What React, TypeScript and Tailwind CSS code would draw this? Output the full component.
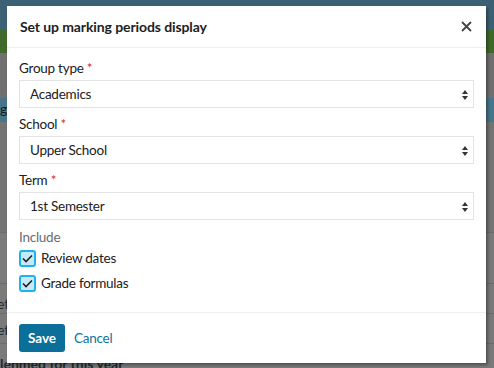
import React from "react"

const font = { fontFamily: 'Lato, "Liberation Sans", sans-serif' }

function SelectField({ label, value }: { label: string; value: string }) {
  return (
    <div className="flex flex-col">
      <label className="text-[13.5px] tracking-[-0.25px] leading-[18px] text-[#212121] mb-[3px]">
        {label} <span className="text-[#e0262b]">*</span>
      </label>
      <div className="relative h-[28px] border border-[#e2e3e4] bg-white flex items-center pl-[10px]">
        <span className="text-[13.5px] tracking-[-0.25px] text-[#212121]">{value}</span>
        <svg className="absolute right-[4px] top-[8px]" width="8" height="12" viewBox="0 0 8 12">
          <path d="M4 1 L7 5 L1 5 Z" fill="#333" />
          <path d="M4 11 L7 7 L1 7 Z" fill="#333" />
        </svg>
      </div>
    </div>
  )
}

function Check({ label }: { label: string }) {
  return (
    <div className="flex items-center gap-[5px] h-[17px]">
      <div className="w-[17px] h-[17px] rounded-[3px] border-2 border-[#1fb2ea] bg-[#c6e9f7] flex items-center justify-center">
        <svg width="11" height="9" viewBox="0 0 11 9">
          <path d="M1 4.5 L4 7.5 L10 1.5" stroke="#1f1f1f" strokeWidth="1.6" fill="none" />
        </svg>
      </div>
      <span className="text-[13.5px] tracking-[-0.25px] text-[#212121]">{label}</span>
    </div>
  )
}

export default function App() {
  return (
    <div className="relative w-[494px] h-[368px] overflow-hidden bg-[#777777]" style={font}>
      {/* page behind the dimmed overlay */}
      <div className="flex flex-col">
        <div className="h-[30px] bg-[#3d6174]" />
        <div className="h-[23px] bg-[#3f6a2b]" />
        <div className="h-[45px] bg-[#707070]" />
        <div className="h-[24px] bg-[#47768b] text-[14px] text-[#1a1a1a] leading-[22px]">g</div>
        <div className="h-[110px] bg-[#747474]" />
        <div className="h-[51px] bg-[#7a7a7a] border-t border-[#6c6c6c]" />
        <div className="h-[30px] bg-[#7a7a7a] border-t border-[#6c6c6c] text-[14px] text-[#1e2a33] leading-[40px] -ml-[3px]">ef</div>
        <div className="h-[30px] bg-[#7a7a7a] border-t border-[#6c6c6c] text-[14px] text-[#1e2a33] leading-[32px] -ml-[3px]">ef</div>
        <div className="h-[30px] bg-[#7a7a7a] border-t border-[#6c6c6c] text-[14px] text-[#1e2a33] font-bold leading-[40px]">lehmed for this year</div>
      </div>

      {/* modal */}
      <div className="absolute left-[7px] top-[6px] w-[479px] h-[357px] bg-white shadow-[2px_2px_3px_rgba(0,0,0,0.35)] flex flex-col">
        <div className="h-[42px] flex items-center justify-between pl-[13px] pr-[14px] border-b border-[#eeeeee]">
          <span className="text-[14px] tracking-[-0.1px] font-bold text-[#212121]">Set up marking periods display</span>
          <svg width="11" height="11" viewBox="0 0 11 11">
            <path d="M1 1 L10 10 M10 1 L1 10" stroke="#444" strokeWidth="1.8" />
          </svg>
        </div>
        <div className="h-[265px] flex flex-col px-[12px] pt-[11px] gap-[7px] border-b border-[#eeeeee]">
          <SelectField label="Group type" value="Academics" />
          <SelectField label="School" value="Upper School" />
          <SelectField label="Term" value="1st Semester" />
          <div className="flex flex-col mt-[1px]">
            <span className="text-[13.5px] tracking-[-0.25px] leading-[18px] text-[#686c73] mb-[4px]">Include</span>
            <Check label="Review dates" />
            <div className="h-[8px]" />
            <Check label="Grade formulas" />
          </div>
        </div>
        <div className="h-[50px] flex items-center gap-[9px] px-[12px]">
          <button className="h-[28px] w-[46px] rounded-[3px] bg-[#0b6f99] text-white text-[13.5px] font-bold">Save</button>
          <span className="text-[13.5px] tracking-[-0.25px] text-[#0a76a3]">Cancel</span>
        </div>
      </div>
    </div>
  )
}
